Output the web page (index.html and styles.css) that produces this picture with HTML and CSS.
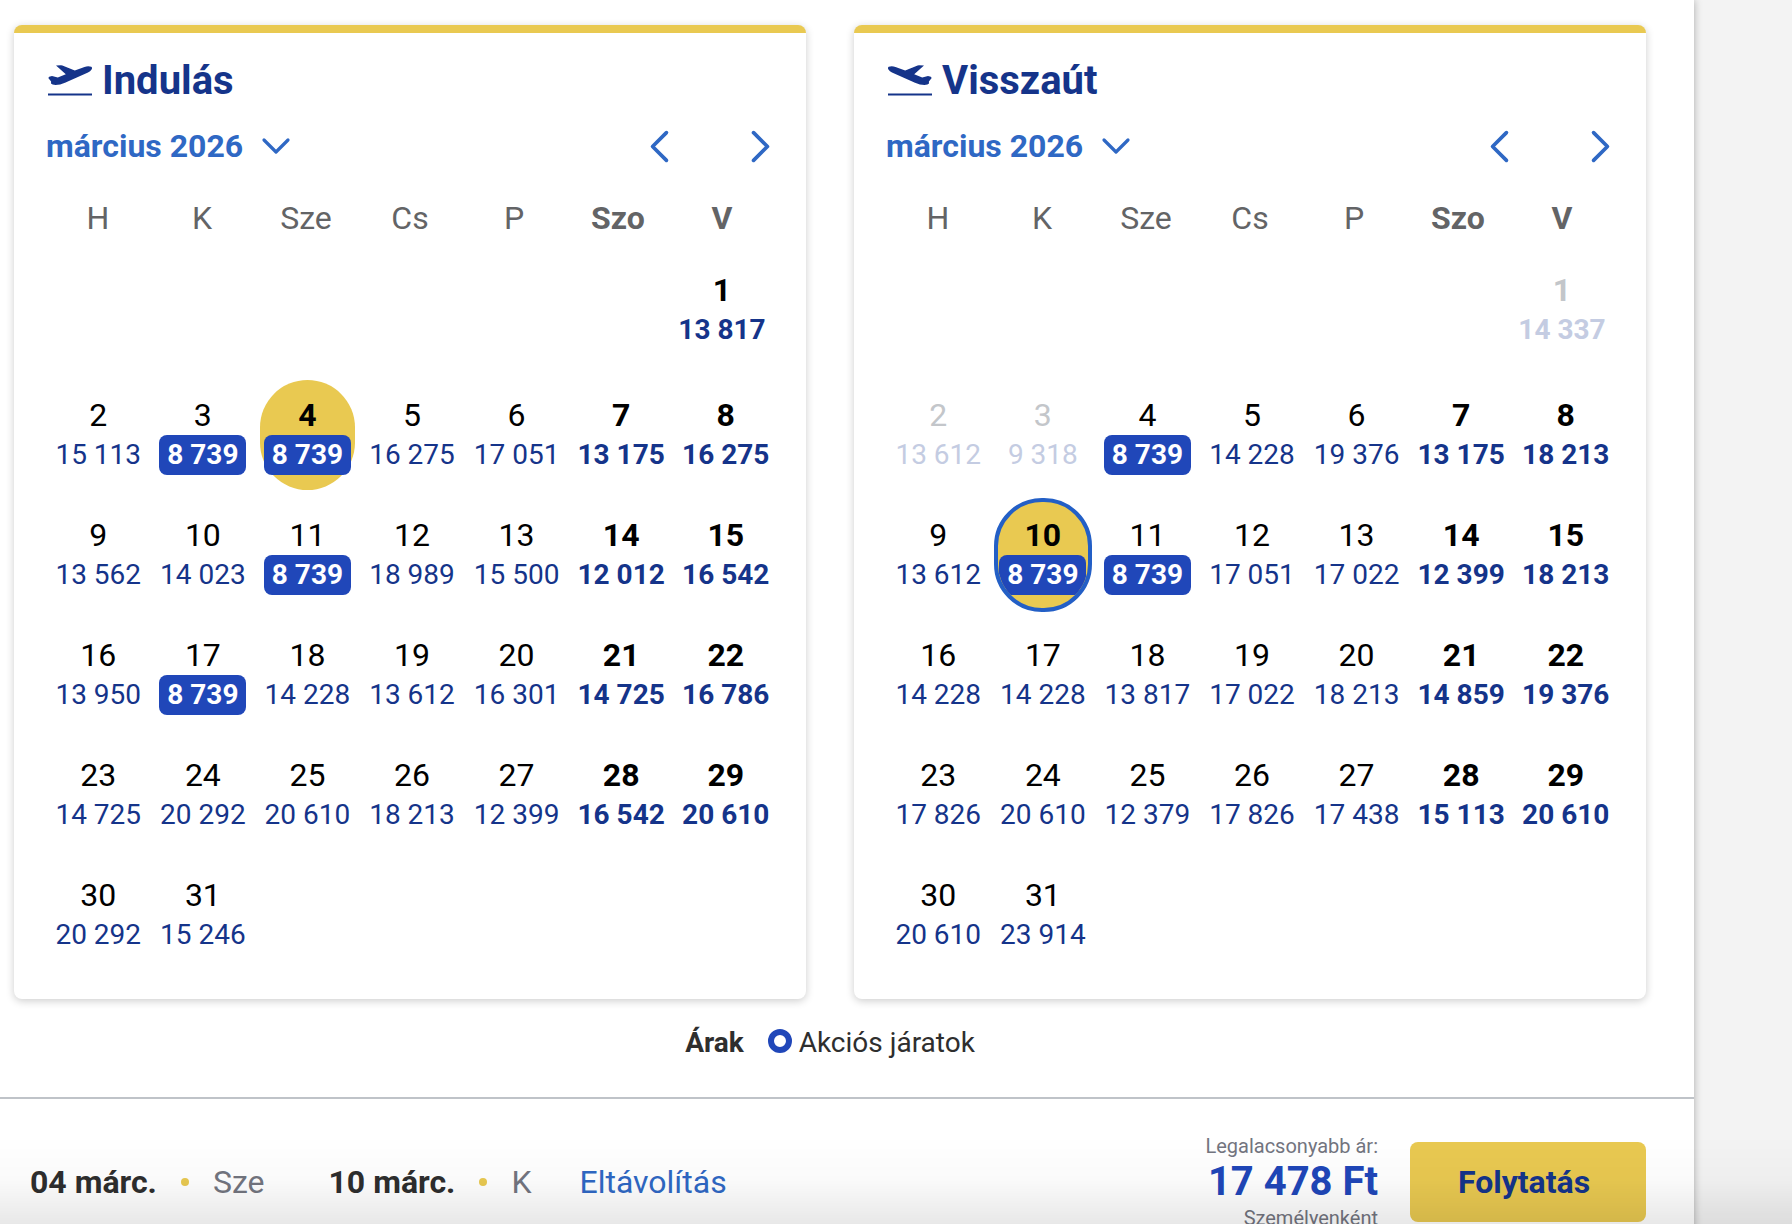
FILE: index.html
```html
<!DOCTYPE html>
<html lang="hu">
<head>
  <meta charset="UTF-8">
  <meta name="viewport" content="width=device-width, initial-scale=1.0">
  <title>Dátumok kiválasztása</title>
  <link rel="stylesheet" href="styles.css">
</head>
<body>

<!-- Icons -->
<svg class="sprite" aria-hidden="true">
  <symbol id="icon-plane" viewBox="0 0 44 32">
    <path d="M8 0.4L13 0.2Q14.500 0.300 15.600 0.900L26.800 5.600L36.500 1.900Q40 0.800 43.300 1.700Q44.700 3 43.400 4.700Q42.400 6.200 40 7.400L17 17.800Q12 20 7.500 20.100L4.600 19.600L3 18.600L3.100 16.600L0.300 12.900L1.200 11.800L4 11.100L9.800 12.500L17.800 9.300Z"/>
    <path d="M0 28.600H44V30.400H0Z"/>
  </symbol>
  <symbol id="icon-chevron" viewBox="0 0 32 32">
    <path d="M4 10L16 22L28 10" fill="none" stroke="currentColor" stroke-width="3.200" stroke-linecap="round" stroke-linejoin="round"/>
  </symbol>
</svg>

<main class="panel">
  <div class="calendars">
    <section class="card">
      <h2 class="card-title">
        <svg class="plane"><use href="#icon-plane"/></svg>
        Indulás
      </h2>
      <div class="month-bar">
        <button type="button" class="month-btn">március 2026 <svg class="chevron"><use href="#icon-chevron"/></svg></button>
        <div class="month-nav">
          <button type="button" class="nav-btn" aria-label="Előző hónap"><svg class="arrow left"><use href="#icon-chevron"/></svg></button>
          <button type="button" class="nav-btn" aria-label="Következő hónap"><svg class="arrow right"><use href="#icon-chevron"/></svg></button>
        </div>
      </div>
      <table class="calendar">
        <thead>
          <tr><th>H</th><th>K</th><th>Sze</th><th>Cs</th><th>P</th><th class="weekend">Szo</th><th class="weekend">V</th></tr>
        </thead>
        <tbody id="outbound"></tbody>
      </table>
    </section>

    <section class="card">
      <h2 class="card-title">
        <svg class="plane flip"><use href="#icon-plane"/></svg>
        Visszaút
      </h2>
      <div class="month-bar">
        <button type="button" class="month-btn">március 2026 <svg class="chevron"><use href="#icon-chevron"/></svg></button>
        <div class="month-nav">
          <button type="button" class="nav-btn" aria-label="Előző hónap"><svg class="arrow left"><use href="#icon-chevron"/></svg></button>
          <button type="button" class="nav-btn" aria-label="Következő hónap"><svg class="arrow right"><use href="#icon-chevron"/></svg></button>
        </div>
      </div>
      <table class="calendar">
        <thead>
          <tr><th>H</th><th>K</th><th>Sze</th><th>Cs</th><th>P</th><th class="weekend">Szo</th><th class="weekend">V</th></tr>
        </thead>
        <tbody id="inbound"></tbody>
      </table>
    </section>
  </div>

  <div class="legend">
    <strong>Árak</strong>
    <span class="legend-item"><span class="ring"></span>Akciós járatok</span>
  </div>

  <footer class="summary">
    <div class="dates">
      <span class="date"><strong>04 márc.</strong><span class="dot"></span><span>Sze</span></span>
      <span class="date"><strong>10 márc.</strong><span class="dot"></span><span>K</span></span>
      <a href="#" class="remove">Eltávolítás</a>
    </div>
    <div class="checkout">
      <div class="total">
        <span>Legalacsonyabb ár:</span>
        <strong>17 478 Ft</strong>
        <span>Személyenként</span>
      </div>
      <button type="button" class="continue">Folytatás</button>
    </div>
  </footer>
</main>

<div class="bottom-fade"></div>

<script>
const OFFER = 8739;
const FIRST_COLUMN = 6; // 1 March 2026 is a Sunday

const outbound = [
  13817,
  15113, 8739, 8739, 16275, 17051, 13175, 16275,
  13562, 14023, 8739, 18989, 15500, 12012, 16542,
  13950, 8739, 14228, 13612, 16301, 14725, 16786,
  14725, 20292, 20610, 18213, 12399, 16542, 20610,
  20292, 15246
];

const inbound = [
  14337,
  13612, 9318, 8739, 14228, 19376, 13175, 18213,
  13612, 8739, 8739, 17051, 17022, 12399, 18213,
  14228, 14228, 13817, 17022, 18213, 14859, 19376,
  17826, 20610, 12379, 17826, 17438, 15113, 20610,
  20610, 23914
];

function formatPrice(n) {
  return Math.floor(n / 1000) + '\u00a0' + String(n % 1000).padStart(3, '0');
}

function renderCalendar(id, prices, selected, firstEnabled, focused) {
  const cells = Array(FIRST_COLUMN).fill('<td></td>');
  prices.forEach((price, i) => {
    const day = i + 1;
    const classes = ['day'];
    if (cells.length % 7 > 4) classes.push('weekend');
    if (price === OFFER) classes.push('offer');
    if (day === selected) classes.push('selected');
    if (day === focused) classes.push('focused');
    cells.push(`<td><button type="button" class="${classes.join(' ')}"${day < firstEnabled ? ' disabled' : ''}>
      <span class="number">${day}</span><span class="price">${formatPrice(price)}</span>
    </button></td>`);
  });
  while (cells.length % 7) cells.push('<td></td>');

  let rows = '';
  for (let i = 0; i < cells.length; i += 7) {
    rows += '<tr>' + cells.slice(i, i + 7).join('') + '</tr>';
  }
  document.getElementById(id).innerHTML = rows;
}

renderCalendar('outbound', outbound, 4, 1);
renderCalendar('inbound', inbound, 10, 4, 10);
</script>

</body>
</html>
```
FILE: styles.css
```css
* {
  box-sizing: border-box;
}
body {
  margin: 0;
  height: 100vh;
  overflow: hidden;
  background: #f3f3f3;
  font-family: Roboto, "Liberation Sans", sans-serif;
  font-size: 32px;
  color: #2e2e2e;
}
button {
  padding: 0;
  border: none;
  background: none;
  font: inherit;
  color: inherit;
  cursor: pointer;
}
.sprite {
  display: none;
}
.panel {
  min-height: 100vh;
  margin-right: 98px;
  background: #fff;
  box-shadow: 0 0 8px rgba(0, 0, 0, 0.3);
}

/* Calendars */
.calendars {
  display: grid;
  grid-template-columns: 1fr 1fr;
  gap: 48px;
  padding: 25px 48px 0 14px;
}
.card {
  padding: 24px 32px;
  border-top: 8px solid #e9c951;
  border-radius: 8px;
  background: #fff;
  box-shadow: 0 2px 8px rgba(0, 0, 0, 0.2);
}
.card-title {
  display: flex;
  align-items: center;
  gap: 10px;
  margin: 0 0 17px 2px;
  font-size: 40px;
  font-weight: 700;
  line-height: 48px;
  color: #15348a;
}
.plane {
  width: 44px;
  height: 32px;
  fill: #15348a;
}
.flip {
  transform: scaleX(-1);
}
.month-bar {
  display: flex;
  justify-content: space-between;
  align-items: center;
  height: 48px;
  margin-right: -5px;
  color: #2f68c4;
}
.month-btn {
  display: flex;
  align-items: center;
  gap: 17px;
  font-weight: 700;
}
.chevron {
  width: 32px;
  height: 32px;
}
.month-nav {
  display: flex;
  gap: 64px;
}
.nav-btn {
  display: flex;
}
.arrow {
  width: 37px;
  height: 37px;
}
.left {
  transform: rotate(90deg);
}
.right {
  transform: rotate(-90deg);
}
.calendar {
  display: block;
  margin-top: 24px;
}
.calendar thead,
.calendar tbody {
  display: block;
}
.calendar tr {
  display: flex;
}
.calendar thead tr {
  margin-bottom: 8px;
}
/* whole weeks run slightly wider than the heading row */
.calendar tbody tr + tr {
  margin-right: -4px;
}
.calendar tbody tr:first-child {
  margin-bottom: 5px;
}
.calendar th,
.calendar td {
  display: flex;
  flex: 1;
  justify-content: center;
  align-items: center;
  height: 120px;
  padding: 0;
}
.calendar th {
  height: 48px;
  font-weight: 400;
  color: #636466;
}
.calendar th.weekend,
.weekend {
  font-weight: 700;
}
.day {
  display: flex;
  flex: none;
  flex-direction: column;
  align-items: center;
  justify-content: center;
  width: 95px;
  height: 110px;
  border-radius: 48px;
  line-height: 40px;
  color: #000;
}
.price {
  border-radius: 8px;
  font-size: 28px;
  white-space: nowrap;
  color: #15348a;
}
.offer .price {
  padding: 0 8px;
  background: #2047b9;
  font-weight: 700;
  color: #fff;
}
.selected {
  background: #e9c951;
}
.selected .number {
  font-weight: 700;
}
.focused {
  width: 98px;
  height: 114px;
  border: 4px solid #235fc6;
  overflow: hidden;
}
.day:disabled .number {
  color: #c3c6ca;
}
.day:disabled .price {
  color: #c4cce2;
}

/* Legend */
.legend {
  display: flex;
  justify-content: center;
  gap: 24px;
  margin: 24px 48px 34px 14px;
  font-size: 28px;
  line-height: 40px;
}
.legend-item {
  display: flex;
  align-items: center;
  gap: 7px;
}
.ring {
  width: 24px;
  height: 24px;
  margin-bottom: 4px;
  border: 6px solid #2047b9;
  border-radius: 50%;
}

/* Summary */
.summary {
  display: flex;
  justify-content: space-between;
  align-items: center;
  padding: 31px 48px 31px 30px;
  border-top: 2px solid #bfc3c8;
}
.dates {
  display: flex;
  align-items: center;
  gap: 64px;
  color: #73757f;
}
.date {
  display: flex;
  align-items: center;
  gap: 24px;
}
.date strong {
  color: #2e2e2e;
}
.dot {
  width: 8px;
  height: 8px;
  border-radius: 50%;
  background: #e9c951;
}
.remove {
  margin-left: -16px;
  color: #2f68c4;
  text-decoration: none;
}
.checkout {
  display: flex;
  align-items: center;
  gap: 32px;
}
.total {
  display: flex;
  flex-direction: column;
  align-items: flex-end;
  font-size: 20px;
  line-height: 32px;
  color: #73757f;
}
.total strong {
  font-size: 40px;
  line-height: 40px;
  color: #2047b9;
}
.continue {
  width: 236px;
  height: 80px;
  padding-right: 8px;
  border-radius: 8px;
  background: #e9c951;
  font-weight: 700;
  color: #15348a;
}
.bottom-fade {
  position: fixed;
  right: 0;
  bottom: 0;
  left: 0;
  height: 88px;
  background: linear-gradient(transparent, rgba(0, 0, 0, 0.02) 50%, rgba(0, 0, 0, 0.09));
  pointer-events: none;
}
```
